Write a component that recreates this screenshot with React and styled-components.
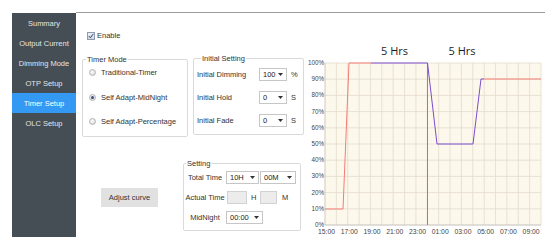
import React from 'react';
import styled, { createGlobalStyle } from 'styled-components';

const Global = createGlobalStyle`
  html, body { margin: 0; padding: 0; background: #fff; }
  body { font-family: "Liberation Sans", Arial, sans-serif; color: #333; }
`;

const Page = styled.div`
  display: flex;
  align-items: flex-start;
  padding: 12px 0 0 12px;
  width: 560px;
  height: 246px;
  box-sizing: border-box;
  overflow: hidden;
`;

const Sidebar = styled.nav`
  width: 64px;
  height: 224px;
  margin-top: 1px;
  flex-shrink: 0;
  background: #454e55;
  display: flex;
  flex-direction: column;
`;

const NavItem = styled.div`
  height: 20px;
  display: flex;
  align-items: center;
  justify-content: center;
  font-size: 7.5px;
  white-space: nowrap;
  color: ${p => (p.$active ? '#ffffff' : '#e2e4e6')};
  background: ${p => (p.$active ? '#3399f3' : 'transparent')};
`;

const Main = styled.main`
  width: 469px;
  flex-shrink: 0;
  border-top: 1px solid #9c9c9c;
  display: flex;
  align-items: flex-start;
  padding-left: 6px;
  box-sizing: border-box;
`;

const LeftCol = styled.div`
  width: 222px;
  flex-shrink: 0;
  display: flex;
  flex-direction: column;
`;

const EnableRow = styled.label`
  display: flex;
  align-items: center;
  gap: 2px;
  height: 9px;
  margin-top: 18px;
  padding-left: 5px;
  font-size: 7.5px;
`;

const CheckBox = styled.span`
  width: 8px;
  height: 8px;
  box-sizing: border-box;
  border: 1px solid #8f9bb0;
  background: linear-gradient(#eef2f7, #cdd6e2);
  display: flex;
  align-items: center;
  justify-content: center;
`;

const TopRow = styled.div`
  display: flex;
  align-items: flex-start;
  gap: 5px;
  margin-top: 18px;
`;

const Group = styled.div`
  position: relative;
  box-sizing: border-box;
  width: ${p => p.$w}px;
  height: ${p => p.$h}px;
  margin-top: ${p => p.$mt || 0}px;
  padding: ${p => p.$pad};
  border: 1px solid #dadada;
  border-radius: 2px;
  display: flex;
  flex-direction: column;
  gap: ${p => p.$gap}px;
`;

const Legend = styled.span`
  position: absolute;
  top: -5px;
  left: ${p => p.$x}px;
  padding: 0 1px;
  background: #fff;
  font-size: 7.5px;
  line-height: 9px;
  color: #333;
  white-space: nowrap;
`;

const RadioRow = styled.label`
  display: flex;
  align-items: center;
  gap: 5px;
  height: 12px;
  font-size: 7.5px;
  white-space: nowrap;
`;

const RadioDot = styled.span`
  width: 7px;
  height: 7px;
  border-radius: 50%;
  box-sizing: border-box;
  border: 1px solid #b2b2b2;
  background: radial-gradient(circle at 40% 35%, #fbfbfb, #d4d4d4);
  display: flex;
  align-items: center;
  justify-content: center;
  &::after {
    content: '';
    width: 3px;
    height: 3px;
    border-radius: 50%;
    background: #2f4f86;
    display: ${p => (p.$on ? 'block' : 'none')};
  }
`;

const FieldRow = styled.div`
  display: flex;
  align-items: center;
  height: 13px;
  font-size: 7.5px;
  white-space: nowrap;
`;

const FieldLabel = styled.span`
  width: ${p => p.$w}px;
  flex-shrink: 0;
  text-align: ${p => p.$align || 'left'};
`;

const Unit = styled.span`
  margin-left: ${p => p.$ml ?? 4}px;
`;

const SelectBox = styled.div`
  box-sizing: border-box;
  width: ${p => p.$w}px;
  height: 13px;
  margin-left: ${p => p.$ml || 0}px;
  border: 1px solid #c6c6c6;
  background: #fff;
  display: flex;
  align-items: center;
  justify-content: space-between;
  padding: 0 3px;
  font-size: 7.5px;
  color: #222;
`;

const TextBox = styled.div`
  box-sizing: border-box;
  width: ${p => p.$w}px;
  height: 13px;
  margin-left: ${p => p.$ml || 0}px;
  border: 1px solid #d2d2d2;
  background: #ececec;
`;

const BottomRow = styled.div`
  display: flex;
  align-items: flex-start;
  margin-top: 26px;
`;

const ButtonSlot = styled.div`
  width: 101px;
  flex-shrink: 0;
  box-sizing: border-box;
  padding: 25px 0 0 19px;
  display: flex;
`;

const Button = styled.button`
  width: 57px;
  height: 19px;
  padding: 0;
  border: none;
  background: #e1e1e1;
  font-family: "Liberation Sans", Arial, sans-serif;
  font-size: 7.5px;
  color: #333;
`;

const ChartSvg = styled.svg`
  display: block;
  flex-shrink: 0;
  margin-top: 27px;
`;

const Caret = () => (
  <svg width="5" height="3" viewBox="0 0 5 3">
    <path d="M0 0 L5 0 L2.5 3 Z" fill="#333" />
  </svg>
);

const Select = ({ w, ml, value }) => (
  <SelectBox $w={w} $ml={ml}>
    <span>{value}</span>
    <Caret />
  </SelectBox>
);

const Chart = () => {
  const L = 21, R = 237, T = 23, B = 185;
  const hw = (R - L) / 19;
  const yv = p => B - ((B - T) * p) / 100;
  const vLines = Array.from({ length: 20 }, (_, i) => L + i * hw);
  const hLines = Array.from({ length: 11 }, (_, i) => i * 10);
  const xLabels = ['15:00', '17:00', '19:00', '21:00', '23:00', '01:00', '03:00', '05:00', '07:00', '09:00'];
  const font = '"Liberation Sans", Arial, sans-serif';
  const blueX = 123.5;
  return (
    <ChartSvg width="244" height="200" viewBox="0 0 244 200">
      <text x="90.5" y="15" textAnchor="middle" fontSize="11" fontFamily='"Open Sans", sans-serif' fill="#1c1c1c">5 Hrs</text>
      <text x="158" y="15" textAnchor="middle" fontSize="11" fontFamily='"Open Sans", sans-serif' fill="#1c1c1c">5 Hrs</text>
      <rect x={L} y={T} width={R - L} height={B - T} fill="#fdf8ec" />
      {vLines.map((x, i) => (
        <line key={'v' + i} x1={x} x2={x} y1={T} y2={B} stroke="#e2dccd" strokeWidth="0.8" />
      ))}
      {hLines.map(p => (
        <line key={'h' + p} x1={L} x2={R} y1={yv(p)} y2={yv(p)} stroke="#e2dccd" strokeWidth="0.8" />
      ))}
      <line x1={L} x2={R} y1={B} y2={B} stroke="#c4c4c4" strokeWidth="0.8" />
      <line x1={L} x2={L} y1={T} y2={B} stroke="#d6d0c2" strokeWidth="0.8" />
      {hLines.map(p => (
        <text key={'yl' + p} x="20" y={yv(p) + 2} textAnchor="end" fontSize="6.3" fontFamily={font} fill="#444">{p}%</text>
      ))}
      {xLabels.map((t, i) => (
        <text key={t} x={L + i * 2 * hw + 1.5} y="193.5" textAnchor="middle" fontSize="6.8" fontFamily={font} fill="#444">{t}</text>
      ))}
      <line x1={blueX} x2={blueX} y1={T} y2={B} stroke="#4f97e0" strokeWidth="1" />
      <polyline points={`${L},169 39,169 45,${T} 67,${T}`} fill="none" stroke="#f47c74" strokeWidth="1" />
      <polyline points={`180,39 ${R},39`} fill="none" stroke="#f47c74" strokeWidth="1" />
      <polyline points={`67,${T} ${blueX},${T} 133,104 169,104 177,39 180,39`} fill="none" stroke="#7c4ccf" strokeWidth="1" />
    </ChartSvg>
  );
};

const navItems = ['Summary', 'Output Current', 'Dimming Mode', 'OTP Setup', 'Timer Setup', 'OLC Setup'];

export default function App() {
  return (
    <>
      <Global />
      <Page>
        <Sidebar>
          {navItems.map(n => (
            <NavItem key={n} $active={n === 'Timer Setup'}>{n}</NavItem>
          ))}
        </Sidebar>
        <Main>
          <LeftCol>
            <EnableRow>
              <CheckBox>
                <svg width="6" height="6" viewBox="0 0 6 6">
                  <path d="M0.8 3 L2.4 4.8 L5.3 0.8" fill="none" stroke="#34466a" strokeWidth="1" />
                </svg>
              </CheckBox>
              <span>Enable</span>
            </EnableRow>
            <TopRow>
              <Group $w={106} $h={78} $mt={1} $pad="6.5px 0 0 6px" $gap={12.5}>
                <Legend $x={3}>Timer Mode</Legend>
                <RadioRow><RadioDot />Traditional-Timer</RadioRow>
                <RadioRow><RadioDot $on />Self Adapt-MidNight</RadioRow>
                <RadioRow><RadioDot />Self Adapt-Percentage</RadioRow>
              </Group>
              <Group $w={111} $h={77} $pad="8.5px 0 0 3px" $gap={10}>
                <Legend $x={7}>Initial Setting</Legend>
                <FieldRow>
                  <FieldLabel $w={62}>Initial Dimming</FieldLabel>
                  <Select w={28} value="100" />
                  <Unit>%</Unit>
                </FieldRow>
                <FieldRow>
                  <FieldLabel $w={62}>Initial Hold</FieldLabel>
                  <Select w={28} value="0" />
                  <Unit>S</Unit>
                </FieldRow>
                <FieldRow>
                  <FieldLabel $w={62}>Initial Fade</FieldLabel>
                  <Select w={28} value="0" />
                  <Unit>S</Unit>
                </FieldRow>
              </Group>
            </TopRow>
            <BottomRow>
              <ButtonSlot>
                <Button>Adjust curve</Button>
              </ButtonSlot>
              <Group $w={118} $h={68} $pad="6.5px 0 0 1px" $gap={7}>
                <Legend $x={2}>Setting</Legend>
                <FieldRow>
                  <FieldLabel $w={40} $align="center">Total Time</FieldLabel>
                  <Select w={33} ml={1} value="10H" />
                  <Select w={36} ml={1} value="00M" />
                </FieldRow>
                <FieldRow>
                  <FieldLabel $w={40} $align="center">Actual Time</FieldLabel>
                  <TextBox $w={20} $ml={2} />
                  <Unit $ml={4}>H</Unit>
                  <TextBox $w={17} $ml={3.5} />
                  <Unit $ml={5}>M</Unit>
                </FieldRow>
                <FieldRow>
                  <FieldLabel $w={40} $align="center">MidNight</FieldLabel>
                  <Select w={37} ml={1} value="00:00" />
                </FieldRow>
              </Group>
            </BottomRow>
          </LeftCol>
          <Chart />
        </Main>
      </Page>
    </>
  );
}
